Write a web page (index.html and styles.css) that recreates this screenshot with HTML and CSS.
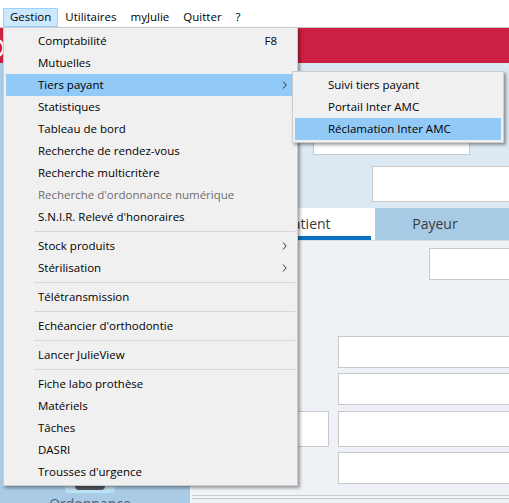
FILE: index.html
```html
<!DOCTYPE html>
<html lang="fr">
<head>
<meta charset="utf-8">
<title>Gestion</title>
<link rel="stylesheet" href="styles.css">
</head>
<body>
<div class="app">
  <nav class="menubar">
    <span class="mb-item active">Gestion</span>
    <span class="mb-item">Utilitaires</span>
    <span class="mb-item">myJulie</span>
    <span class="mb-item">Quitter</span>
    <span class="mb-item">?</span>
  </nav>
  <header class="redbar">
    <svg class="logo" width="6" height="35" viewBox="0 0 6 35"><circle cx="-5" cy="16" r="8.5" fill="none" stroke="#fff" stroke-width="2.5"/></svg>
  </header>
  <div class="main">
    <aside class="sidebar">
      <div class="navbtn">
        <div class="navicon"><div class="navicon-inner"></div></div>
        <span class="navlabel">Ordonnance</span>
      </div>
    </aside>
    <section class="content">
      <div class="top-panel">
        <div class="field f-top1"></div>
        <div class="field f-top2"></div>
      </div>
      <div class="tabs">
        <div class="tab-spacer"></div>
        <div class="tab active">Patient</div>
        <div class="tab payeur">Payeur</div>
      </div>
      <div class="lower">
        <div class="field f-a"></div>
        <div class="row r1"><div class="field f-wide"></div></div>
        <div class="row r2"><div class="field f-wide"></div></div>
        <div class="row r3"><div class="field f-small"></div><div class="field f-wide"></div></div>
        <div class="row r4"><div class="field f-wide"></div></div>
        <div class="footer-lines"></div>
      </div>
    </section>
  </div>

  <div class="menu dropdown">
    <div class="mi"><span class="lbl">Comptabilité</span><span class="key">F8</span><span class="arr"></span></div>
    <div class="mi"><span class="lbl">Mutuelles</span><span class="arr"></span></div>
    <div class="mi hl"><span class="lbl">Tiers payant</span><span class="arr"><svg width="5" height="8" viewBox="0 0 5 8"><path d="M1 0.5l3.2 3.5L1 7.5" fill="none" stroke="#333" stroke-width="1"/></svg></span></div>
    <div class="mi"><span class="lbl">Statistiques</span><span class="arr"></span></div>
    <div class="mi"><span class="lbl">Tableau de bord</span><span class="arr"></span></div>
    <div class="mi"><span class="lbl">Recherche de rendez-vous</span><span class="arr"></span></div>
    <div class="mi"><span class="lbl">Recherche multicritère</span><span class="arr"></span></div>
    <div class="mi disabled"><span class="lbl">Recherche d'ordonnance numérique</span><span class="arr"></span></div>
    <div class="mi"><span class="lbl">S.N.I.R. Relevé d'honoraires</span><span class="arr"></span></div>
    <div class="sep"></div>
    <div class="mi"><span class="lbl">Stock produits</span><span class="arr"><svg width="5" height="8" viewBox="0 0 5 8"><path d="M1 0.5l3.2 3.5L1 7.5" fill="none" stroke="#333" stroke-width="1"/></svg></span></div>
    <div class="mi"><span class="lbl">Stérilisation</span><span class="arr"><svg width="5" height="8" viewBox="0 0 5 8"><path d="M1 0.5l3.2 3.5L1 7.5" fill="none" stroke="#333" stroke-width="1"/></svg></span></div>
    <div class="sep"></div>
    <div class="mi"><span class="lbl">Télétransmission</span><span class="arr"></span></div>
    <div class="sep"></div>
    <div class="mi"><span class="lbl">Echéancier d'orthodontie</span><span class="arr"></span></div>
    <div class="sep"></div>
    <div class="mi"><span class="lbl">Lancer JulieView</span><span class="arr"></span></div>
    <div class="sep"></div>
    <div class="mi"><span class="lbl">Fiche labo prothèse</span><span class="arr"></span></div>
    <div class="mi"><span class="lbl">Matériels</span><span class="arr"></span></div>
    <div class="mi"><span class="lbl">Tâches</span><span class="arr"></span></div>
    <div class="mi"><span class="lbl">DASRI</span><span class="arr"></span></div>
    <div class="mi"><span class="lbl">Trousses d'urgence</span><span class="arr"></span></div>
  </div>

  <div class="menu submenu">
    <div class="mi"><span class="lbl">Suivi tiers payant</span></div>
    <div class="mi"><span class="lbl">Portail Inter AMC</span></div>
    <div class="mi hl"><span class="lbl">Réclamation Inter AMC</span></div>
  </div>
</div>
</body>
</html>
```
FILE: styles.css
```css
* { box-sizing: border-box; margin: 0; padding: 0; }
html, body { width: 509px; height: 503px; overflow: hidden; }
body { font-family: "Open Sans", "Noto Sans", sans-serif; color: #000; background: #fff; }

.app { position: relative; width: 509px; height: 503px; display: flex; flex-direction: column; overflow: hidden; }

/* menubar */
.menubar { height: 27px; flex: none; display: flex; align-items: flex-end; padding-left: 3px; background: #fff; font-size: 11.5px; }
.mb-item { height: 19px; line-height: 16px; padding: 0 6px; border: 1px solid transparent; white-space: nowrap; }
.mb-item.active { background: #cce8ff; border-color: #99d1ff; }

/* red header */
.redbar { height: 36px; flex: none; background: #cd1f41; border-top: 1px solid #c9c9c9; display: flex; align-items: flex-start; }
.logo { display: block; margin-top: 4px; }

/* main */
.main { flex: 1; display: flex; min-height: 0; }
.sidebar { width: 192px; flex: none; background: #a9cbe6; border-right: 2px solid #f3f6f9; padding-top: 387px; overflow: hidden; }
.navbtn { width: 180px; display: flex; flex-direction: column; align-items: center; }
.navicon { width: 50px; height: 43px; border: 2px solid #b6e7f8; border-radius: 4px; background: #c4e0f3; display: flex; align-items: flex-end; justify-content: center; padding-bottom: 1px; }
.navicon-inner { width: 30px; height: 30px; background: #555a5e; border-radius: 3px 3px 4px 4px; }
.navlabel { margin-top: 1px; font-size: 14px; line-height: 19px; color: #4f6070; }

.content { flex: 1; display: flex; flex-direction: column; min-width: 0; overflow: hidden; }
.top-panel { height: 145px; flex: none; background: #dce8f2; padding-top: 59px; display: flex; flex-direction: column; gap: 11px; }
.field { background: #fff; border: 1px solid #c9c9c9; flex: none; }
.f-top1 { margin-left: 121px; width: 157px; height: 33px; }
.f-top2 { margin-left: 180px; width: 200px; height: 36px; }

.tabs { height: 32px; flex: none; display: flex; background: #dce8f2; }
.tab-spacer { width: 48px; flex: none; }
.tab { display: flex; align-items: center; justify-content: center; font-size: 14px; color: #3a3a3a; padding-bottom: 2px; }
.tab.active { width: 135px; flex: none; background: linear-gradient(#0b72c3, #0b72c3) no-repeat left bottom / calc(100% - 4px) 4px, #fff; }
.tab.payeur { flex: 1; background: #a8cbe5; padding-right: 14px; }

.lower { flex: 1; background: #eef1f5; border-top: 1px solid #d6dde4; padding-top: 7px; display: flex; flex-direction: column; }
.f-a { margin-left: 237px; width: 120px; height: 32px; }
.row { display: flex; flex: none; gap: 9px; }
.r1 { margin-top: 56px; }
.r2 { margin-top: 5px; }
.r3 { margin-top: 6px; }
.r4 { margin-top: 5px; }
.f-wide { width: 220px; height: 32px; }
.r1 .f-wide, .r2 .f-wide, .r4 .f-wide { margin-left: 146px; }
.r3 .f-wide { height: 36px; }
.f-small { margin-left: 60px; width: 77px; height: 36px; }
.footer-lines { margin-top: 11px; height: 4px; border-top: 1px solid #c7ccd1; border-bottom: 1px solid #c7ccd1; background: #f3f5f7; flex: none; }

/* popup menus */
.menu { position: absolute; background: #f0f0f0; border: 1px solid #cccccc; padding: 2px; box-shadow: 2px 2px 3px rgba(0,0,0,0.38); font-size: 11.5px; }
.dropdown { left: 3px; top: 27px; width: 295px; }
.submenu { left: 292px; top: 71px; width: 212px; }
.mi { height: 22px; display: flex; align-items: center; padding-left: 32px; padding-bottom: 1px; white-space: nowrap; }
.submenu .mi { padding-left: 33px; }
.mi.hl { background: #91c9f7; }
.mi.disabled { color: #6d6d6d; }
.mi .key { margin-left: auto; }
.mi .arr { width: 18px; margin-left: auto; flex: none; display: flex; align-items: center; padding-left: 5px; padding-top: 1px; }
.mi .key + .arr { margin-left: 0; }
.mi .arr svg { display: block; }
.sep { height: 1px; margin: 3px 0 3px 28px; background: #d7d7d7; }
```
